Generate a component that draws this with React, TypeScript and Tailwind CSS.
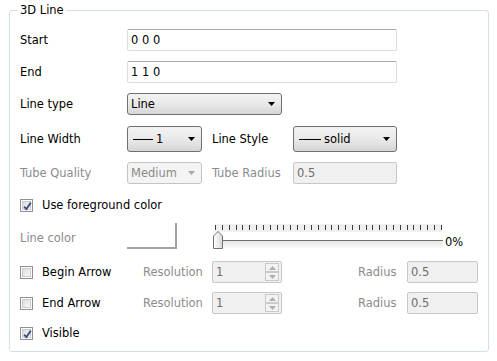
import type { ReactNode } from "react";

const GRAY = "text-[#8b8b8b]";

function TextBox({ value, width, disabled }: { value: string; width: string; disabled?: boolean }) {
    return (
        <div
            className={`${width} h-[22px] flex items-center pl-[3px] rounded-[2px] border ${
                disabled
                    ? "bg-[#f0f0f0] border-[#c4c8cc] text-[#6d6d6d]"
                    : "bg-white border-[#dadde3] border-t-[#a4a6ab] text-black"
            }`}
        >
            {value}
        </div>
    );
}

function Arrow({ disabled }: { disabled?: boolean }) {
    return (
        <svg width="7" height="4" viewBox="0 0 7 4" className="shrink-0">
            <polygon points="0,0 7,0 3.5,4" fill={disabled ? "#a8a8a8" : "#000"} />
        </svg>
    );
}

function Combo({ children, width, height, disabled }: { children: ReactNode; width: string; height: string; disabled?: boolean }) {
    return (
        <div
            className={`${width} ${height} flex items-center justify-between pl-[3px] pr-[6px] rounded-[3px] border ${
                disabled
                    ? "bg-[#f4f4f4] border-[#c1c4c7] text-[#8b8b8b]"
                    : "bg-linear-to-b from-[#f3f3f3] via-[#e9e9e9] to-[#d6d6d6] border-[#707070] text-black"
            }`}
        >
            <div className="flex items-center">{children}</div>
            <Arrow disabled={disabled} />
        </div>
    );
}

function LineGlyph({ w }: { w: string }) {
    return <span className={`${w} h-px bg-black mr-[3px] ml-[2px]`} />;
}

function CheckBox({ checked }: { checked?: boolean }) {
    return (
        <div className="w-[13px] h-[13px] border border-[#8e8f8f] bg-white p-px shrink-0">
            <div className="w-full h-full border border-[#c8c9cb] bg-linear-to-br from-[#dcdcdc] to-[#fbfbfb] relative">
                {checked && (
                    <svg width="11" height="11" viewBox="0 0 11 11" className="absolute -left-px -top-px">
                        <path d="M2.2 5.6 L4.3 8.2 L8.8 1.6" fill="none" stroke="#3b4f8f" strokeWidth="1.9" strokeLinejoin="round" />
                    </svg>
                )}
            </div>
        </div>
    );
}

function SpinBox({ value }: { value: string }) {
    return (
        <div className="w-[70px] h-[22px] flex items-center justify-between rounded-[2px] border border-[#c4c8cc] bg-[#f0f0f0] pl-[3px] pr-[2px] text-[#6d6d6d]">
            <span>{value}</span>
            <div className="flex flex-col h-[18px] w-[14px]">
                {[0, 1].map((i) => (
                    <div key={i} className="flex-1 flex items-center justify-center border border-[#c9cbcd] bg-[#f3f3f3]">
                        <svg width="7" height="4" viewBox="0 0 7 4">
                            <polygon points={i === 0 ? "0,4 7,4 3.5,0" : "0,0 7,0 3.5,4"} fill="#b0b0b0" />
                        </svg>
                    </div>
                ))}
            </div>
        </div>
    );
}

function Slider() {
    const ticks = Array.from({ length: 34 });
    return (
        <div className="relative w-[230px] h-[26px]">
            <div className="ml-[2px] mt-px w-[227px] h-[8px] bg-[#f0f0f0] flex justify-between pt-px">
                {ticks.map((_, i) => (
                    <span key={i} className="w-px h-[5px] bg-[#3a3a3a]" />
                ))}
            </div>
            <div className="ml-[4px] mt-[8px] w-[226px] h-px bg-[#707070]" />
            <div className="ml-[4px] w-[226px] h-[8px] bg-linear-to-b from-[#e6e6e6] to-white" />
            {/* slider handle */}
            <svg width="10" height="18" viewBox="0 0 10 18" className="absolute left-0 top-[7px]">
                <defs>
                    <linearGradient id="hg" x1="0" y1="0" x2="1" y2="0">
                        <stop offset="0" stopColor="#ffffff" />
                        <stop offset="1" stopColor="#d8d8d8" />
                    </linearGradient>
                </defs>
                <polygon points="0.5,5 5,0.5 9.5,5 9.5,17.5 0.5,17.5" fill="url(#hg)" stroke="#707070" />
            </svg>
        </div>
    );
}

export default function App() {
    return (
        <div className="w-[497px] h-[361px] bg-white text-[12.75px] leading-[16px] text-black font-['DejaVu_Sans_Condensed','DejaVu_Sans',sans-serif] font-stretch-condensed pt-[2px]">
            <fieldset className="ml-[9px] w-[480px] border border-[#d5dfe5] rounded-[3px] pl-[10px] pt-[11px] pb-[10px]">
                <legend className="px-[2px] -ml-[2px]">3D Line</legend>
                <div className="flex flex-col">
                    <div className="flex items-center h-[22px]">
                        <span className="w-[107px]">Start</span>
                        <TextBox value="0 0 0" width="w-[270px]" />
                    </div>
                    <div className="flex items-center h-[22px] mt-[10px]">
                        <span className="w-[107px]">End</span>
                        <TextBox value="1 1 0" width="w-[270px]" />
                    </div>
                    <div className="flex items-center h-[22px] mt-[10px]">
                        <span className="w-[107px]">Line type</span>
                        <Combo width="w-[155px]" height="h-[22px]">Line</Combo>
                    </div>
                    <div className="flex items-center h-[26px] mt-[11px]">
                        <span className="w-[107px]">Line Width</span>
                        <Combo width="w-[75px]" height="h-[26px]">
                            <LineGlyph w="w-[20px]" />
                            1
                        </Combo>
                        <span className="w-[81px] ml-[10px]">Line Style</span>
                        <Combo width="w-[104px]" height="h-[26px]">
                            <LineGlyph w="w-[22px]" />
                            solid
                        </Combo>
                    </div>
                    <div className="flex items-center h-[22px] mt-[10px]">
                        <span className={`w-[107px] ${GRAY}`}>Tube Quality</span>
                        <Combo width="w-[75px]" height="h-[22px]" disabled>
                            Medium
                        </Combo>
                        <span className={`w-[81px] ml-[10px] ${GRAY}`}>Tube Radius</span>
                        <TextBox value="0.5" width="w-[104px]" disabled />
                    </div>
                    <div className="flex items-center h-[16px] mt-[13px] gap-[9px]">
                        <CheckBox checked />
                        <span>Use foreground color</span>
                    </div>
                    <div className="flex items-center h-[26px] mt-[10px]">
                        <span className={`w-[107px] ${GRAY} mt-[3px]`}>Line color</span>
                        <div className="w-[50px] h-[26px] bg-white border-r-2 border-b-2 border-[#a3a3a3]" />
                        <div className="ml-[36px]">
                            <Slider />
                        </div>
                        <span className="ml-[2px] mt-[12px]">0%</span>
                    </div>
                    <div className="flex items-center h-[22px] mt-[12px]">
                        <CheckBox />
                        <span className="ml-[9px] w-[101px]">Begin Arrow</span>
                        <span className={`w-[69px] ${GRAY}`}>Resolution</span>
                        <SpinBox value="1" />
                        <span className={`ml-[76px] w-[49px] ${GRAY}`}>Radius</span>
                        <TextBox value="0.5" width="w-[71px]" disabled />
                    </div>
                    <div className="flex items-center h-[22px] mt-[9px]">
                        <CheckBox />
                        <span className="ml-[9px] w-[101px]">End Arrow</span>
                        <span className={`w-[69px] ${GRAY}`}>Resolution</span>
                        <SpinBox value="1" />
                        <span className={`ml-[76px] w-[49px] ${GRAY}`}>Radius</span>
                        <TextBox value="0.5" width="w-[71px]" disabled />
                    </div>
                    <div className="flex items-center h-[16px] mt-[11px] gap-[9px]">
                        <CheckBox checked />
                        <span>Visible</span>
                    </div>
                </div>
            </fieldset>
        </div>
    );
}
